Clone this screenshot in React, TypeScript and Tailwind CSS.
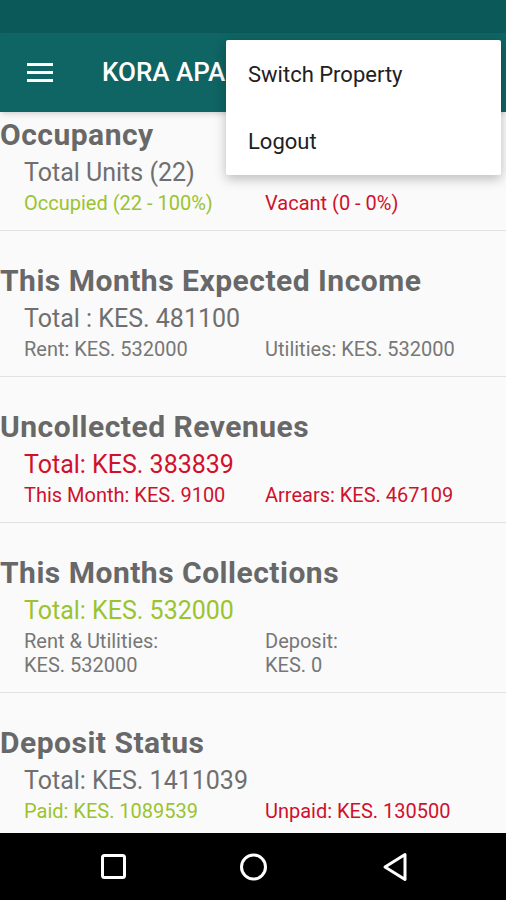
import React from 'react';

const GREEN = 'text-[#9ac42f]';
const RED = 'text-[#d0112b]';

type Cell = { text: React.ReactNode; color?: string };

interface Section {
  title: string;
  total: string;
  totalColor?: string;
  left: Cell;
  right: Cell;
}

const sections: Section[] = [
  {
    title: 'Occupancy',
    total: 'Total Units (22)',
    left: { text: 'Occupied (22 - 100%)', color: GREEN },
    right: { text: 'Vacant (0 - 0%)', color: RED },
  },
  {
    title: 'This Months Expected Income',
    total: 'Total : KES. 481100',
    left: { text: 'Rent: KES. 532000' },
    right: { text: 'Utilities: KES. 532000' },
  },
  {
    title: 'Uncollected Revenues',
    total: 'Total: KES. 383839',
    totalColor: RED,
    left: { text: 'This Month: KES. 9100', color: RED },
    right: { text: 'Arrears: KES. 467109', color: RED },
  },
  {
    title: 'This Months Collections',
    total: 'Total: KES. 532000',
    totalColor: GREEN,
    left: {
      text: (
        <>
          Rent &amp; Utilities:
          <br />
          KES. 532000
        </>
      ),
    },
    right: {
      text: (
        <>
          Deposit:
          <br />
          KES. 0
        </>
      ),
    },
  },
  {
    title: 'Deposit Status',
    total: 'Total: KES. 1411039',
    left: { text: 'Paid: KES. 1089539', color: GREEN },
    right: { text: 'Unpaid: KES. 130500', color: RED },
  },
];

function SectionBlock({ s, first }: { s: Section; first: boolean }) {
  return (
    <div className={`${first ? 'pt-[5px]' : 'pt-[32px] border-t border-[#e2e2e2]'} pb-[15px]`}>
      <h2 className="text-[30px] leading-[36px] font-bold text-[#686868] tracking-[0.5px] whitespace-nowrap">{s.title}</h2>
      <p className={`mt-1 pl-6 text-[25px] leading-[32px] ${s.totalColor ?? 'text-[#6f6f6f]'}`}>{s.total}</p>
      <div className="mt-[2px] pl-6 flex text-[20px] leading-[24px]">
        <div className={`w-[241px] ${s.left.color ?? 'text-[#777777]'}`}>{s.left.text}</div>
        <div className={s.right.color ?? 'text-[#777777]'}>{s.right.text}</div>
      </div>
    </div>
  );
}

export default function App() {
  return (
    <div className="w-[506px] h-[900px] flex flex-col bg-[#fafafa] overflow-hidden relative font-['Roboto','Liberation_Sans',sans-serif]">
      {/* Status bar */}
      <div className="h-[33px] bg-[#0b5959] shrink-0" />

      {/* Toolbar */}
      <div className="h-[79px] bg-[#0f6464] shrink-0 flex items-center shadow-md z-10">
        <div className="ml-[27px] w-[26px] flex flex-col gap-[5px]">
          <span className="block h-[3px] bg-white" />
          <span className="block h-[3px] bg-white" />
          <span className="block h-[3px] bg-white" />
        </div>
        {/* title is covered by the popup menu, clip it at the menu edge */}
        <div className="ml-[49px] w-[124px] overflow-hidden">
          <h1 className="text-white text-[26px] font-medium whitespace-nowrap">KORA APARTMENTS</h1>
        </div>
      </div>

      {/* Content */}
      <div className="flex-1 overflow-hidden">
        {sections.map((s, i) => (
          <SectionBlock key={s.title} s={s} first={i === 0} />
        ))}
      </div>

      {/* Nav bar */}
      <div className="h-[67px] bg-black shrink-0 flex items-center">
        <svg width="506" height="67" viewBox="0 0 506 67" fill="none" stroke="white" strokeWidth="3">
          <rect x="102.5" y="22.5" width="22" height="22" rx="2" />
          <circle cx="253.5" cy="34" r="12" />
          <path d="M405 21.5 L385 34 L405 46.5 Z" strokeLinejoin="round" />
        </svg>
      </div>

      {/* Overflow menu */}
      <div className="absolute left-[226px] top-[40px] w-[275px] h-[135px] bg-white rounded-[2px] shadow-[0_4px_12px_rgba(0,0,0,0.25)] z-20 flex flex-col">
        <div className="h-[68px] flex items-center pl-[22px] text-[22px] text-[#212121]">Switch Property</div>
        <div className="h-[67px] flex items-center pl-[22px] text-[22px] text-[#212121]">Logout</div>
      </div>
    </div>
  );
}
